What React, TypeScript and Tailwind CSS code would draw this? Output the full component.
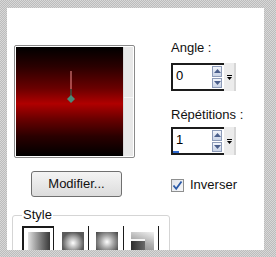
import React from 'react';

const font = { fontFamily: '"Liberation Sans", Arial, sans-serif' };

const SpinBox: React.FC<{ value: string; marker?: boolean }> = ({ value, marker }) => (
  <div className="relative flex h-[28px] w-[65px] items-stretch border-2 border-[#1c1c1c] bg-white">
    <span className="flex-1 pl-[3px] pt-[2px] text-[13px] leading-[18px] text-black">{value}</span>
    {/* up / down arrows */}
    <div className="my-[1px] flex w-[10px] flex-col gap-[1px]">
      <div className="flex flex-1 items-center justify-center border border-[#8d9bb8] bg-gradient-to-b from-[#f2f5fb] to-[#c9d3e6]">
        <svg width="7" height="4" viewBox="0 0 7 4"><path d="M0 4 L3.5 0 L7 4 Z" fill="#4b5f8c" /></svg>
      </div>
      <div className="flex flex-1 items-center justify-center border border-[#8d9bb8] bg-gradient-to-b from-[#f2f5fb] to-[#c9d3e6]">
        <svg width="7" height="4" viewBox="0 0 7 4"><path d="M0 0 L3.5 4 L7 0 Z" fill="#4b5f8c" /></svg>
      </div>
    </div>
    {/* dropdown */}
    <div className="-my-[2px] -mr-[2px] ml-[2px] flex w-[12px] flex-col items-center justify-center border-r-2 border-[#d6d6d6] bg-[#ececec]">
      <div className="h-[1px] w-[5px] bg-black" />
      <svg className="mt-[1px]" width="5" height="3" viewBox="0 0 5 3"><path d="M0 0 L2.5 3 L5 0 Z" fill="#000" /></svg>
    </div>
    {marker && <div className="absolute bottom-0 left-0 h-[2px] w-[6px] bg-[#2f6ad0]" />}
  </div>
);

const App: React.FC = () => {
  return (
    <div
      className="h-[257px] w-[276px] overflow-hidden bg-[repeating-conic-gradient(#bcbcbc_0%_25%,#d8d8d8_0%_50%)] bg-[length:2px_2px] pl-[7px] pt-[8px]"
      style={font}
    >
      <div className="h-[242px] w-[257px] overflow-hidden bg-white text-[13px] text-[#111]">
        <div className="flex">
          {/* Preview */}
          <div className="ml-[7px] mt-[37px] flex h-[113px] w-[121px] rounded-[2px] border border-[#8a8a8a] p-[1px]">
            <div className="relative flex-1 bg-[linear-gradient(to_bottom,#000000_0%,#2a0000_18%,#6a0000_38%,#b00000_52%,#6a0000_66%,#2a0000_82%,#000000_100%)]">
              <svg className="absolute left-[49px] top-[24px]" width="12" height="34" viewBox="0 0 12 34">
                <line x1="6" y1="0" x2="6" y2="18" stroke="#f49090" strokeWidth="1" />
                <line x1="6" y1="18" x2="6" y2="26" stroke="#3a5a48" strokeWidth="1.4" />
                <path d="M6 24 L10 28 L6 32 L2 28 Z" fill="#4c8a78" />
              </svg>
            </div>
            <div className="w-[10px] border-l border-[#d8d8d8] bg-[#e8e8e8]">
              <div className="mt-[50px] h-[1px] w-full bg-[#f6f6f6]" />
            </div>
          </div>

          {/* Right column */}
          <div className="ml-[36px] mt-[32px] flex flex-col">
            <span className="leading-[16px]">Angle :</span>
            <div className="mt-[7px]">
              <SpinBox value="0" />
            </div>
            <span className="mt-[16px] leading-[16px]">Répétitions :</span>
            <div className="mt-[4px]">
              <SpinBox value="1" marker />
            </div>
          </div>
        </div>

        {/* Button + checkbox */}
        <div className="mt-[13px] flex items-start">
          <button className="ml-[24px] h-[26px] w-[91px] rounded-[3px] border border-[#707070] bg-gradient-to-b from-[#f4f4f4] to-[#dcdcdc] text-[13px] leading-[24px] text-[#111]">
            Modifier...
          </button>
          <div className="ml-[49px] mt-[6px] flex items-center">
            <div className="flex h-[13px] w-[13px] items-center justify-center border border-[#8e8f8f] bg-gradient-to-br from-[#dfe3ea] to-[#f7f8fa]">
              <svg width="11" height="11" viewBox="0 0 11 11">
                <path d="M1.5 5.5 L4.2 8.8 L9.5 1.5" fill="none" stroke="#2a5aa8" strokeWidth="1.8" />
              </svg>
            </div>
            <span className="ml-[6px] leading-[16px]">Inverser</span>
          </div>
        </div>

        {/* Style group */}
        <div className="relative ml-[5px] mt-[18px] h-[60px] w-[158px] rounded-[3px] border border-[#d5d5d5]">
          <span className="absolute -top-[9px] left-[9px] bg-white px-[1px] leading-[16px]">Style</span>
          <div className="ml-[9px] mt-[10px] flex">
            <div className="h-[34px] w-[32px] border-l-2 border-t-2 border-r border-[#1a1a1a] pl-[4px] pt-[4px]">
              <div className="h-[26px] w-[22px] bg-gradient-to-r from-[#e2e2e2] to-[#3a3a3a]" />
            </div>
            <div className="ml-[4px] h-[34px] w-[31px] border-r border-[#1a1a1a] pl-[4px] pt-[6px]">
              <div className="h-[22px] w-[22px] bg-[radial-gradient(closest-side,#ffffff_0%,#a9a9a9_55%,#5a5a5a_100%)]" />
            </div>
            <div className="ml-[2px] h-[34px] w-[33px] border-r border-[#1a1a1a] pl-[5px] pt-[6px]">
              <div className="h-[22px] w-[22px] bg-[radial-gradient(circle_at_50%_45%,#ffffff_0%,#a4a4a4_40%,#4a4a4a_85%)]" />
            </div>
            <div className="ml-[1px] h-[34px] w-[34px] border-r border-[#1a1a1a] pl-[6px] pt-[6px]">
              <div className="relative h-[22px] w-[23px] bg-[linear-gradient(200deg,#f2f2f2_0%,#b0b0b0_45%,#7a7a7a_100%)]">
                <div className="absolute left-0 top-[7px] h-[15px] w-[14px] border-t-2 border-[#f4f4f4] bg-[linear-gradient(to_right,#2e2e2e,#6a6a6a)]" />
              </div>
            </div>
          </div>
        </div>
      </div>
    </div>
  );
};

export default App;
